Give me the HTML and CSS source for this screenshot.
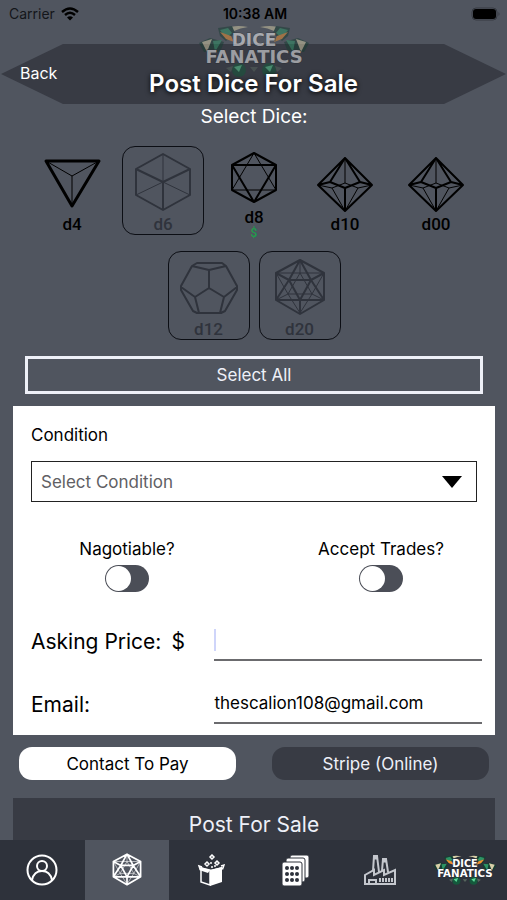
FILE: index.html
```
<!DOCTYPE html>
<html lang="en">
<head>
  <meta charset="UTF-8" />
  <meta name="viewport" content="width=device-width, initial-scale=1.0"/>
  <title>Post Dice For Sale</title>
  <link rel="stylesheet" href="styles.css">
</head>
<body>
<svg class="defs" aria-hidden="true">
  <symbol id="logo" viewBox="0 0 112 54">
    <path d="M50 3 Q36 0 28 5 L36 7 Q42 4 50 3Z M62 3 Q76 0 84 5 L76 7 Q70 4 62 3Z" fill="#d8cfa8"/>
    <path d="M20 4 L34 2 L37 9 L28 17 L22 12Z M92 4 L78 2 L75 9 L84 17 L90 12Z" fill="#173d32"/>
    <path d="M22 6 l8 -2 4 5 -6 5z M90 6 l-8 -2 -4 5 6 5z" fill="#2d9465"/>
    <path d="M22 8 L33 12 L36 18 L28 15Z M90 8 L79 12 L76 18 L84 15Z" fill="#f09030"/>
    <path d="M1 19 L12 14 L26 18 L22 28 L6 28Z M111 19 L100 14 L86 18 L90 28 L106 28Z" fill="#173d32"/>
    <path d="M4 18 L14 15 L9 28Z M108 18 L98 15 L103 28Z" fill="#d8cfa8"/>
    <path d="M15 17 L24 16 L17 28Z M97 17 L88 16 L95 28Z" fill="#2d9465"/>
    <circle cx="41" cy="46" r="7" fill="#14593c"/>
    <circle cx="71" cy="46" r="7" fill="#14593c"/>
    <path d="M36 43 l8 -2 -3 7z M67 43 l8 -2 -3 7z" fill="#58d896"/>
    <path d="M28 44 l7 -2 -2 6z M84 44 l-7 -2 2 6z M52 43 h8 l-4 5z" fill="#57665e"/>
    <text x="56" y="22" class="logo-text" font-size="17" text-anchor="middle">DICE</text>
    <text x="56" y="39" class="logo-text" font-size="18" text-anchor="middle">FANATICS</text>
  </symbol>
  <symbol id="d20" viewBox="0 0 60 60">
    <path class="thin" d="M30 2V15M6 15H54M30 15L18 36H42ZM18 36L6 15M18 36L6 42M18 36L30 55L42 36L54 15M42 36L54 42"/>
    <path d="M30 2L54 15V42L30 56L6 42V15ZM6 15L19 22H41L54 15M30 2L19 22L30 42L41 22ZM19 22L6 42H54L41 22M30 42V56"/>
  </symbol>
</svg>

<div class="app">
  <div class="status-bar">
    <div class="carrier">
      <span>Carrier</span>
      <svg width="18" height="14" viewBox="0 0 18 14"><path d="M1 5Q9-2 17 5M4 8Q9 3.500 14 8" fill="none" stroke="#000" stroke-width="2.400"/><path d="M6 10.500Q9 8 12 10.500L9 13.500Z"/></svg>
    </div>
    <span class="clock">10:38 AM</span>
    <svg class="battery" width="30" height="14" viewBox="0 0 30 14"><rect x="1" y="1" width="25" height="12" rx="4" fill="none" stroke="#363a42" stroke-width="1"/><rect x="2" y="2" width="23" height="10" rx="3"/><path d="M27.500 5v4q2-2 0-4z" fill="#363a42"/></svg>
  </div>

  <header class="banner">
    <svg class="banner-logo" role="img" aria-label="Dice Fanatics"><use href="#logo"/></svg>
    <a href="#" class="back">Back</a>
    <h1>Post Dice For Sale</h1>
  </header>

  <main>
    <h2>Select Dice:</h2>
    <div class="dice">
      <button class="die">
        <svg viewBox="0 0 60 60"><path class="thin" d="M4 8L30 23L57 8M30 23V53"/><path class="bold" d="M4 8H57L30 53Z"/></svg>
        <span>d4</span>
      </button>
      <button class="die picked">
        <svg viewBox="0 0 60 60"><path class="thin" d="M30 1V29M3 42L30 29L57 42"/><path d="M30 1L57 16V42L30 57L3 42V16ZM3 16L30 29L57 16M30 29V57"/></svg>
        <span>d6</span>
      </button>
      <button class="die">
        <svg viewBox="0 0 60 60"><path class="thin" d="M30 7L8 44H52Z"/><path d="M30 7L52 19V44L30 56L8 44V19ZM8 19H52L30 56Z"/></svg>
        <span>d8</span>
        <span class="price">$</span>
      </button>
      <button class="die">
        <svg viewBox="0 0 60 60"><path class="thin" d="M30 5V30M3 32L17 35L30 30L43 35L57 32M17 35L30 58L43 35"/><path d="M30 5L57 32L30 58L3 32ZM3 32L15 29L30 35L45 29L57 32M15 29L30 5L45 29M30 35V58"/></svg>
        <span>d10</span>
      </button>
      <button class="die">
        <svg viewBox="0 0 60 60"><path class="thin" d="M30 5V30M3 32L17 35L30 30L43 35L57 32M17 35L30 58L43 35"/><path d="M30 5L57 32L30 58L3 32ZM3 32L15 29L30 35L45 29L57 32M15 29L30 5L45 29M30 35V58"/></svg>
        <span>d00</span>
      </button>
      <button class="die picked">
        <svg viewBox="0 0 60 60"><path d="M18 5H43L47 8L58 28V32L46 53L42 55H18L14 53L2 32V28L13 8ZM13 8L30 12L47 8M30 12V30L16 39L2 29M30 30L45 39L58 29M16 39L20 55M45 39L41 55"/></svg>
        <span>d12</span>
      </button>
      <button class="die picked">
        <svg><use href="#d20"/></svg>
        <span>d20</span>
      </button>
    </div>
    <button class="select-all">Select All</button>

    <form class="card">
      <label for="condition">Condition</label>
      <div class="select-wrap">
        <select id="condition"><option>Select Condition</option></select>
        <svg width="20" height="12" viewBox="0 0 20 12"><path d="M0 0H20L10 12Z"/></svg>
      </div>
      <div class="toggles">
        <label>Nagotiable?<input type="checkbox"></label>
        <label>Accept Trades?<input type="checkbox"></label>
      </div>
      <div class="field">
        <label for="price">Asking Price:<span class="dollar">$</span></label>
        <div class="input-wrap caret"><input type="text" id="price"></div>
      </div>
      <div class="field">
        <label for="email">Email:</label>
        <div class="input-wrap"><input type="email" id="email" value="thescalion108@gmail.com"></div>
      </div>
    </form>

    <div class="pay">
      <button class="pay-btn active">Contact To Pay</button>
      <button class="pay-btn">Stripe (Online)</button>
    </div>
    <button class="post">Post For Sale</button>
  </main>

  <nav>
    <a href="#" aria-label="Profile">
      <svg width="32" height="32" viewBox="0 0 32 32" fill="none" stroke="currentColor" stroke-width="2"><circle cx="16" cy="16" r="14.500"/><circle cx="16" cy="12" r="5"/><path d="M6 26Q8 17 16 17Q24 17 26 26"/></svg>
    </a>
    <a href="#" class="current" aria-label="Dice">
      <svg class="nav-d20"><use href="#d20"/></svg>
    </a>
    <a href="#" aria-label="Box">
      <svg width="28" height="32" viewBox="0 0 28 32" fill="currentColor"><path d="M13 16L25 13V28L13 32Z"/><path d="M4 14L13 16V31L4 28Z" fill="none" stroke="currentColor" stroke-width="1.500"/><path d="M4 13L2 16L11 19L13 16ZM25 13L27 15L16 19L13 16Z"/><path d="M5 13L2 12L3 15M24 12L27 11L26 14" fill="none" stroke="currentColor" stroke-width="1.500"/><path d="M15 1L17 3L15 5L13 3ZM10 8L12 10L10 12L8 10ZM20 7L22 9L20 11L18 9Z" fill="none" stroke="currentColor" stroke-width="1.500"/><circle cx="14" cy="9" r="1"/><circle cx="15" cy="13" r="1"/><circle cx="18" cy="12" r="1"/></svg>
    </a>
    <a href="#" aria-label="Collection">
      <svg width="28" height="32" viewBox="0 0 28 32" fill="currentColor" stroke="#2e323b"><rect x="8" y="1" width="19" height="23" rx="2"/><rect x="4" y="4" width="19" height="24" rx="2"/><rect x="0" y="8" width="20" height="24" rx="2"/><g fill="#2e323b" stroke="none"><circle cx="5" cy="14" r="2"/><circle cx="10" cy="14" r="2"/><circle cx="15" cy="14" r="2"/><circle cx="5" cy="20" r="2"/><circle cx="10" cy="20" r="2"/><circle cx="15" cy="20" r="2"/><circle cx="5" cy="26" r="2"/><circle cx="10" cy="26" r="2"/><circle cx="15" cy="26" r="2"/></g></svg>
    </a>
    <a href="#" aria-label="Makers" class="factory">
      <svg width="32" height="32" viewBox="0 0 32 32" fill="none" stroke="currentColor" stroke-width="2"><path d="M1 30V21L10 16V21L20 16V21L31 16V30ZM9 17L10 2H13L15 18M18 17L19 5H22L24 18"/><path d="M9 4H14M18 7H23" stroke-width="3"/><path d="M5 30V26H12V30"/><path d="M15 26H29" stroke-width="4" stroke-dasharray="2 1"/></svg>
    </a>
    <a href="#" aria-label="Dice Fanatics">
      <svg class="nav-logo"><use href="#logo"/></svg>
    </a>
  </nav>
</div>
</body>
</html>
```
FILE: styles.css
```
* {
  box-sizing: border-box;
}

body {
  margin: 0;
  font-family: Inter, "Liberation Sans", sans-serif;
  font-size: 17px;
  background: #50555f;
  color: #000;
}

button, input, select {
  font: inherit;
  color: inherit;
  border: none;
  border-radius: 0;
  background: none;
  padding: 0;
  margin: 0;
  outline: none;
}

a {
  color: inherit;
  text-decoration: none;
}

.defs {
  display: none;
}

.app {
  display: flex;
  flex-direction: column;
  height: 100vh;
}

.status-bar {
  display: grid;
  grid-template-columns: 1fr auto 1fr;
  align-items: center;
  height: 27px;
  padding: 0 6px 0 9px;
  margin-bottom: 17px;
  font-size: 14px;
  flex-shrink: 0;
}

.carrier {
  display: flex;
  align-items: center;
  gap: 6px;
  color: #14161a;
}

.clock {
  font-weight: 600;
}

.battery {
  justify-self: end;
}

.banner {
  position: relative;
  display: grid;
  grid-template-columns: 1fr auto 1fr;
  height: 60px;
  padding: 0 20px;
  color: #fff;
  flex-shrink: 0;
}

.banner::before {
  content: "";
  position: absolute;
  inset: 0 1px;
  background: #383b44;
  clip-path: polygon(0 50%, 62px 0, calc(100% - 62px) 0, 100% 50%, calc(100% - 62px) 100%, 62px 100%);
}

.banner-logo {
  position: absolute;
  left: 50%;
  top: -20px;
  width: 112px;
  height: 54px;
  transform: translateX(-50%);
  opacity: 0.5;
}

.logo-text {
  font-family: "DejaVu Sans", sans-serif;
  font-weight: bold;
  fill: #fff;
  stroke: #23272e;
  stroke-width: 1px;
  paint-order: stroke;
}

.back {
  position: relative;
  align-self: center;
  padding-bottom: 2px;
  font-size: 16px;
}

h1 {
  position: relative;
  align-self: end;
  margin: 0;
  padding-bottom: 6px;
  font-size: 24px;
  font-weight: 600;
  line-height: 28px;
  text-shadow: 0 1px 5px #000;
}

main {
  flex: 1;
  min-height: 0;
  overflow-y: auto;
  scrollbar-width: none;
  padding: 0 12px 16px 13px;
}

h2 {
  margin: 0;
  font-size: 19px;
  font-weight: normal;
  line-height: 25px;
  text-align: center;
  color: #fff;
}

.dice {
  display: flex;
  flex-wrap: wrap;
  justify-content: center;
  gap: 16px 9px;
  max-width: 482px;
  margin: 17px auto 16px;
}

.die {
  display: flex;
  flex-direction: column;
  align-items: center;
  justify-content: center;
  width: 82px;
  height: 89px;
  padding-top: 6px;
  border: 1px solid transparent;
  border-radius: 13px;
  font-family: Roboto, sans-serif;
  font-weight: 500;
  line-height: 22px;
}

.die svg {
  width: 60px;
  height: 60px;
  flex-shrink: 0;
}

.die svg, .nav-d20 {
  fill: none;
  stroke: currentColor;
  stroke-width: 2px;
  stroke-linejoin: round;
}

.die .bold {
  stroke-width: 3px;
}

.thin {
  stroke-width: 1px;
}

.picked {
  border-color: #0c0e14;
  color: #2f333c;
}

.die .price {
  margin-bottom: 4px;
  font-size: 12px;
  line-height: 10px;
  color: #1f9d4c;
}

.select-all {
  display: block;
  width: calc(100% - 24px);
  height: 38px;
  margin: 0 12px 12px;
  border: 3px solid #eef0f8;
  color: #eef0f8;
}

.card {
  padding: 18px 18px 11px;
  background: #fff;
}

.card > label {
  display: block;
  line-height: 22px;
}

.select-wrap {
  position: relative;
  margin-top: 15px;
}

.select-wrap select {
  appearance: none;
  display: block;
  width: 100%;
  height: 41px;
  padding: 0 9px;
  border: 1px solid #222;
  color: #606064;
}

.select-wrap svg {
  position: absolute;
  right: 15px;
  top: 15px;
  pointer-events: none;
}

.toggles {
  display: grid;
  grid-template-columns: 1fr 1fr;
  margin: 36px -31px 0;
}

.toggles label {
  display: flex;
  flex-direction: column;
  align-items: center;
  gap: 5px;
  line-height: 22px;
}

.toggles input {
  appearance: none;
  width: 44px;
  height: 27px;
  padding: 1px;
  border-radius: 14px;
  background: #4b4e57;
}

.toggles input::before {
  content: "";
  display: block;
  width: 25px;
  height: 25px;
  border-radius: 50%;
  background: #fff;
}

.toggles input:checked::before {
  margin-left: auto;
}

.field {
  display: grid;
  grid-template-columns: 2fr 3fr;
  align-items: center;
  margin: 23px -5px 0 0;
  font-size: 21px;
}

.toggles + .field {
  margin-top: 29px;
}

.dollar {
  margin-left: 10px;
}

.input-wrap {
  position: relative;
}

.input-wrap input {
  display: block;
  width: 100%;
  height: 40px;
  border-bottom: 2px solid #6b6b6e;
  font-size: 17px;
}

.field .input-wrap {
  margin-left: 3px;
}

.caret::before {
  content: "";
  position: absolute;
  left: 0;
  top: 8px;
  width: 2px;
  height: 22px;
  background: #cfd5fa;
}

.pay {
  display: grid;
  grid-template-columns: 1fr 1fr;
  gap: 36px;
  margin: 12px 6px 18px;
}

.pay-btn {
  height: 33px;
  border-radius: 13px;
  background: #383b44;
  color: #eef0f8;
}

.pay-btn.active {
  background: #fff;
  color: #000;
}

.post {
  display: block;
  width: 100%;
  height: 52px;
  background: #383b44;
  color: #eef0f8;
  font-size: 21px;
}

nav {
  display: grid;
  grid-template-columns: repeat(6, 1fr);
  height: 60px;
  background: #2e323b;
  color: #fff;
  flex-shrink: 0;
}

nav a {
  display: flex;
  align-items: center;
  justify-content: center;
  min-width: 0;
}

nav .current {
  background: #50555f;
}

nav .factory {
  color: #c4c7cd;
}

.nav-d20 {
  width: 34px;
  height: 34px;
  stroke-width: 3px;
}

.nav-logo {
  width: 64px;
  height: 40px;
}
```
